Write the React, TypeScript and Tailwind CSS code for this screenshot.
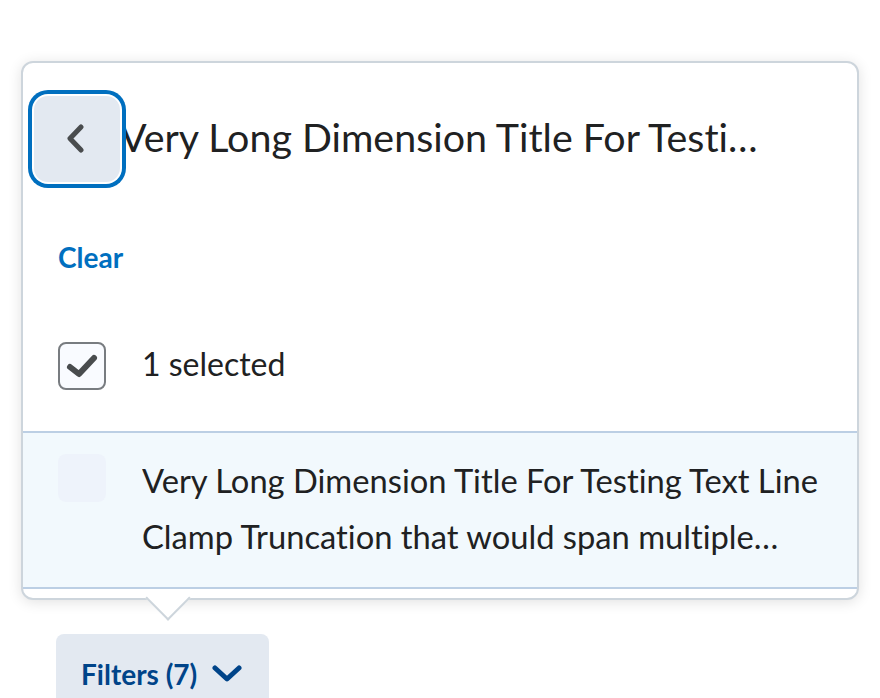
import React from "react";

function ChevronLeft() {
  return (
    <svg width="20" height="30" viewBox="0 0 20 30" fill="none">
      <path d="M14 3 L3 14.5 L14 26" stroke="#494c4e" strokeWidth="5" strokeLinecap="round" strokeLinejoin="round" />
    </svg>
  );
}

function ChevronDown() {
  return (
    <svg width="30" height="18" viewBox="0 0 30 18" fill="none">
      <path d="M3 3 L15 14 L27 3" stroke="#004489" strokeWidth="5" strokeLinecap="round" strokeLinejoin="round" />
    </svg>
  );
}

function Checkbox({ checked }: { checked: boolean }) {
  if (!checked) {
    return <div className="w-[48px] h-[48px] shrink-0 rounded-[8px] bg-[#eef3fb]" />;
  }
  return (
    <div className="w-[48px] h-[48px] shrink-0 rounded-[8px] border-2 border-[#787c80] bg-[#f9fbff] flex items-center justify-center">
      <svg width="44" height="44" viewBox="0 0 44 44" fill="none">
        <path d="M10 23 L19 30 L34 14" stroke="#494c4e" strokeWidth="6" strokeLinecap="round" strokeLinejoin="round" />
      </svg>
    </div>
  );
}

export default function App() {
  return (
    <div className="min-h-[698px] bg-white pl-[21px] pt-[61px] font-['Lato','Liberation_Sans',sans-serif] text-[#202122] [font-variant-ligatures:none]">
      <div className="relative w-[838px] rounded-[12px] border-2 border-[#cdd5dc] bg-white shadow-[0_2px_14px_rgba(0,0,0,0.12)]">
        <div className="flex items-center pl-[11px] pt-[33px]">
          <button className="w-[86px] h-[86px] shrink-0 rounded-[14px] bg-[#e3e9f1] flex items-center justify-center shadow-[0_0_0_2px_#fff,0_0_0_6px_#006fbf] relative z-10">
            <ChevronLeft />
          </button>
          <h2 className="w-[642px] truncate text-[39.4px] leading-[56px] font-normal pb-[4px]">
            Very Long Dimension Title For Testing Text Line Clamp Truncation that would span multiple lines
          </h2>
        </div>

        <div className="mt-[55px] pl-[35px] h-[40px] flex items-center">
          <span className="text-[28px] font-bold text-[#006fbf]">Clear</span>
        </div>

        <div className="mt-[65px] mb-[41px] pl-[35px] flex items-center gap-[36px]">
          <Checkbox checked />
          <span className="relative -top-[2px] text-[32px] leading-[48px]">1 selected</span>
        </div>

        <div className="pb-[9px]">
          <div className="border-t-[2px] border-b-[2px] border-[#bccfe4] bg-[#f2f9fd] pl-[35px] pr-[36px] pt-[20px] pb-[22px] flex items-start gap-[36px]">
            <div className="pt-[1px]">
              <Checkbox checked={false} />
            </div>
            <p className="text-[32.7px] leading-[56px] line-clamp-2">
              Very Long Dimension Title For Testing Text Line Clamp Truncation that would span multiple lines of text in the list
            </p>
          </div>
        </div>

        <div className="absolute left-[121px] top-[calc(100%-2px)] w-[48px] h-[26px] overflow-hidden">
          <div className="absolute left-[8px] top-[-14px] w-[32px] h-[32px] rotate-45 bg-white border-r-2 border-b-2 border-[#cdd5dc]" />
        </div>
      </div>

      <button className="mt-[34px] ml-[35px] h-[80px] rounded-[8px] bg-[#e3e9f1] pl-[25px] pr-[27px] flex items-center gap-[15px]">
        <span className="text-[28px] font-bold text-[#004489]">Filters (7)</span>
        <ChevronDown />
      </button>
    </div>
  );
}
